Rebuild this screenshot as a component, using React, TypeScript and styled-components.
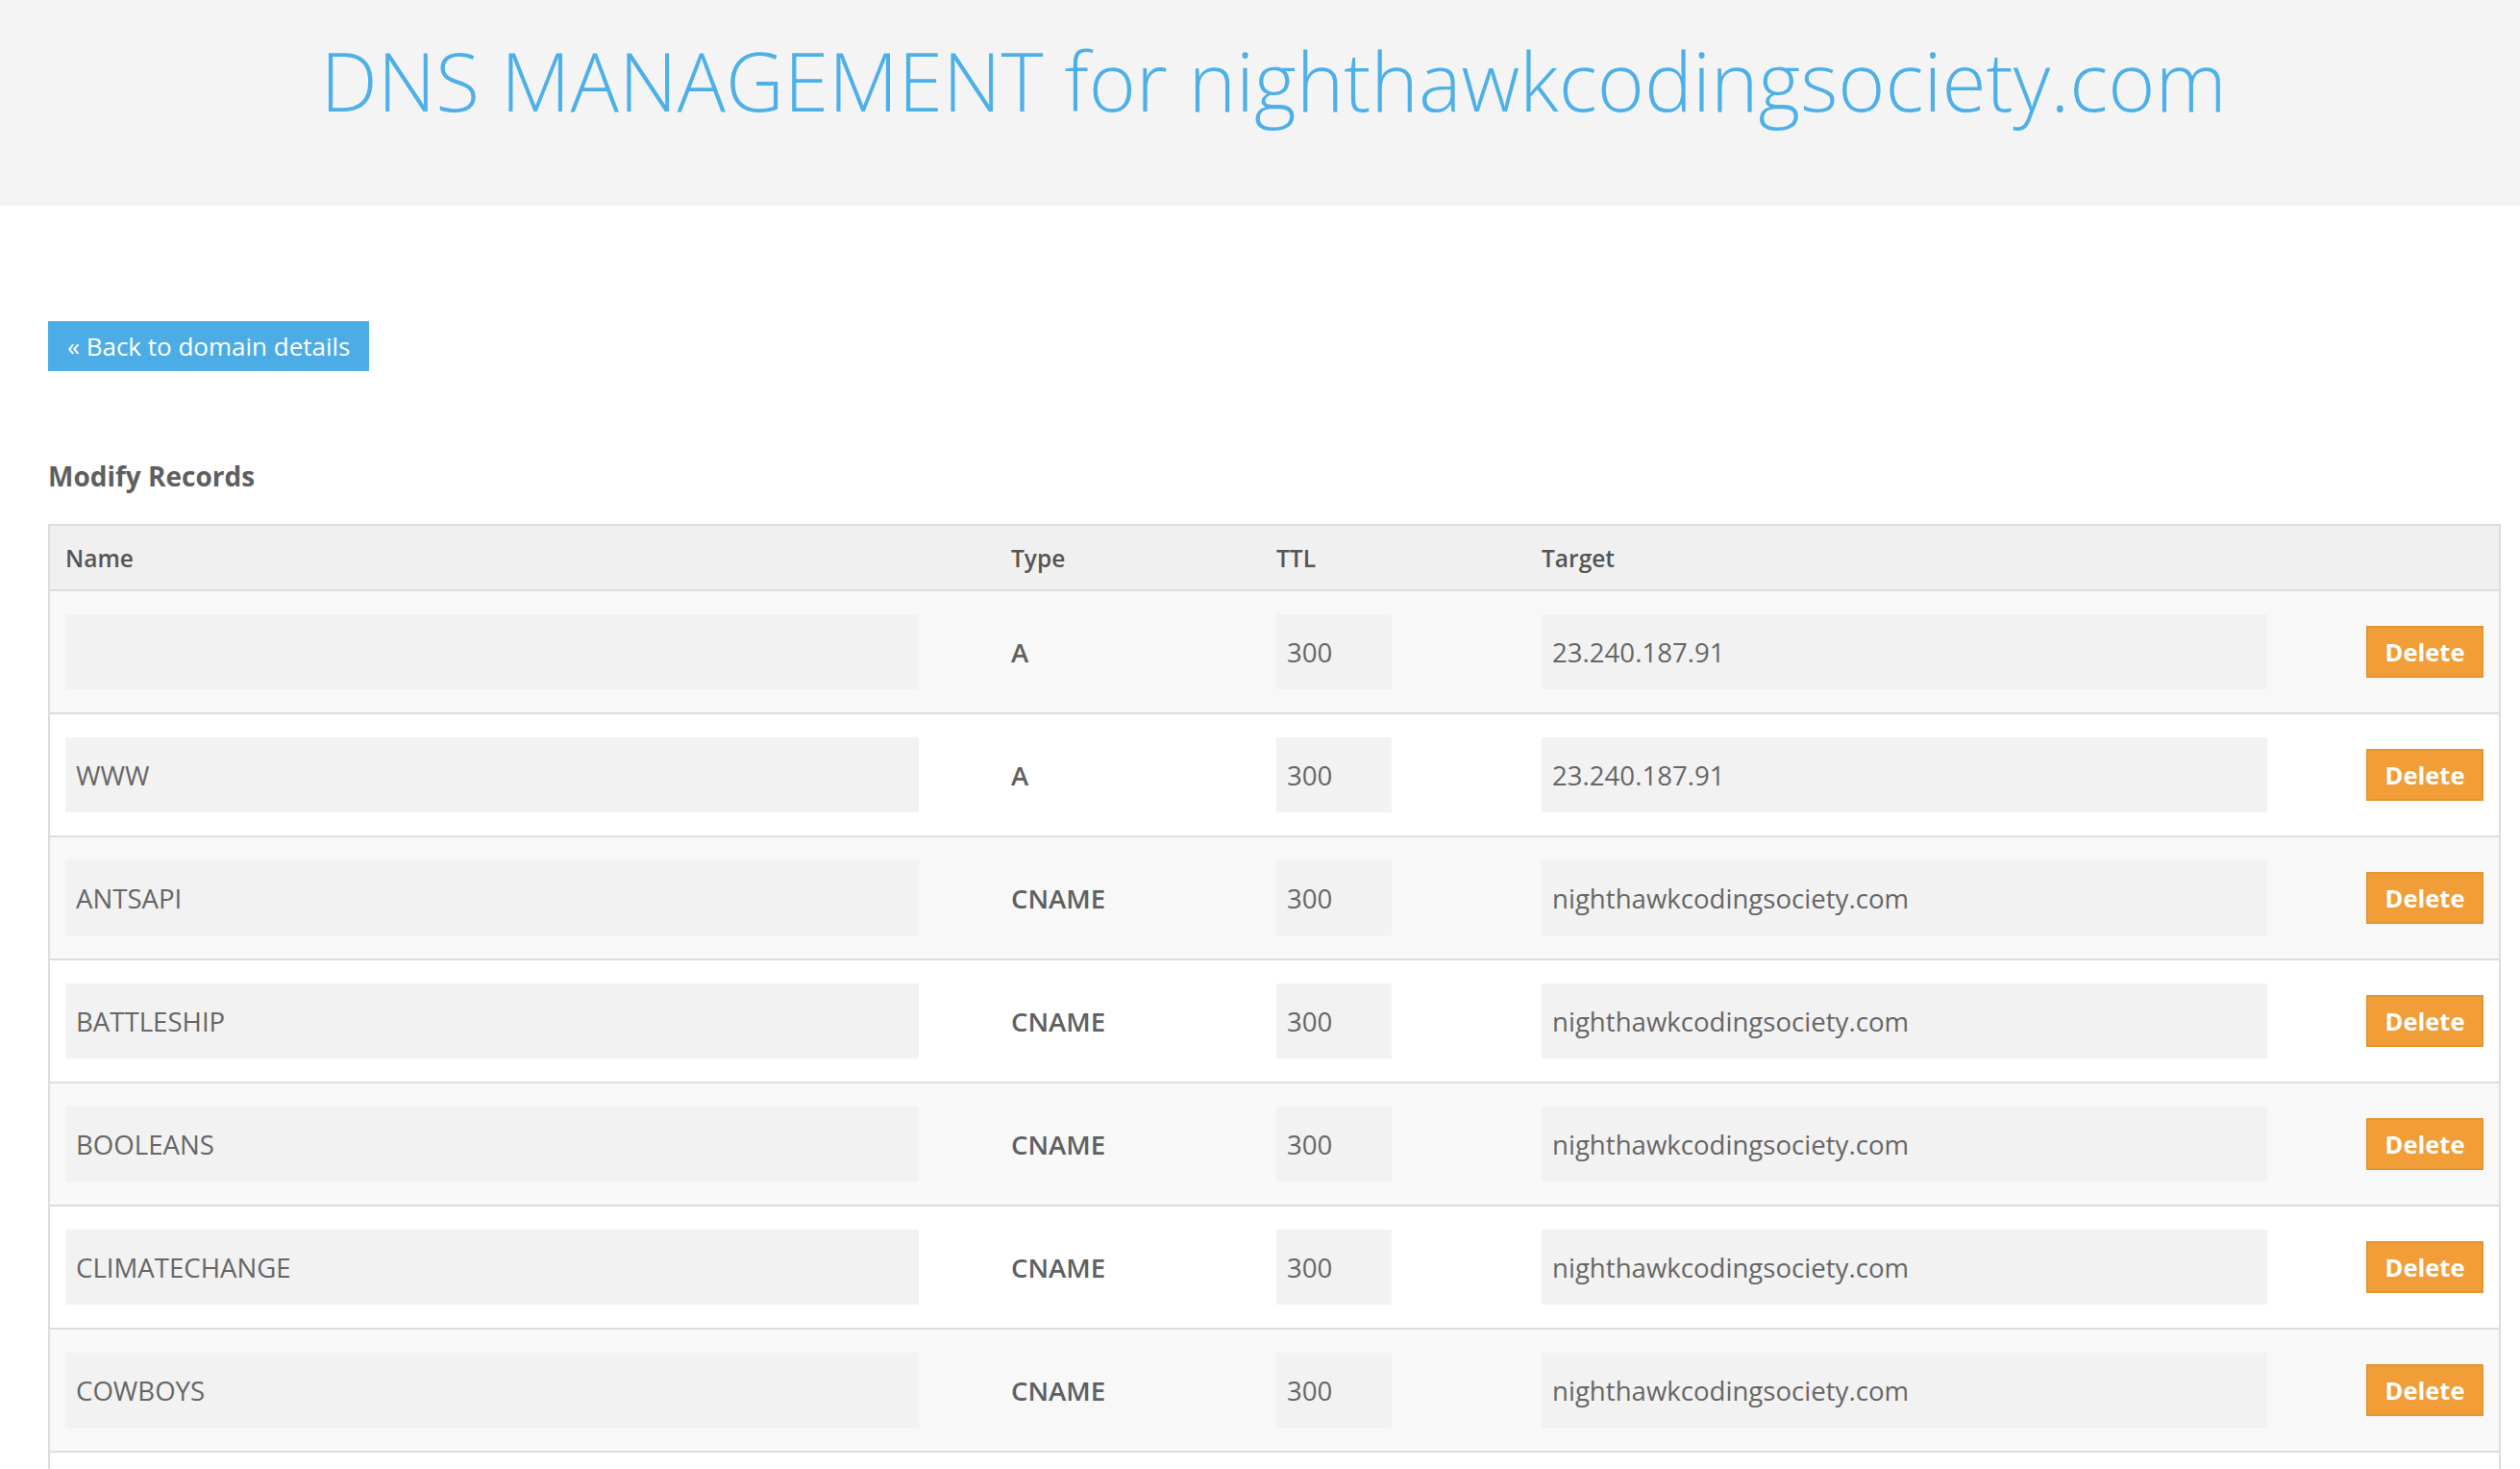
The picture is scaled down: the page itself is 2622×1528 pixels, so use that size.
import styled, { createGlobalStyle } from "styled-components";

type DnsRecord = {
  name: string;
  type: string;
  ttl: number;
  target: string;
};

const records: DnsRecord[] = [
  { name: "", type: "A", ttl: 300, target: "23.240.187.91" },
  { name: "WWW", type: "A", ttl: 300, target: "23.240.187.91" },
  { name: "ANTSAPI", type: "CNAME", ttl: 300, target: "nighthawkcodingsociety.com" },
  { name: "BATTLESHIP", type: "CNAME", ttl: 300, target: "nighthawkcodingsociety.com" },
  { name: "BOOLEANS", type: "CNAME", ttl: 300, target: "nighthawkcodingsociety.com" },
  { name: "CLIMATECHANGE", type: "CNAME", ttl: 300, target: "nighthawkcodingsociety.com" },
  { name: "COWBOYS", type: "CNAME", ttl: 300, target: "nighthawkcodingsociety.com" },
  { name: "CSA", type: "CNAME", ttl: 300, target: "nighthawkcodingsociety.com" },
];

const App = () => {
  return (
    <>
      <GlobalStyle />
      <Header>
        <Title>DNS MANAGEMENT for nighthawkcodingsociety.com</Title>
      </Header>
      <Main>
        <BackButton href="#">« Back to domain details</BackButton>
        <SectionTitle>Modify Records</SectionTitle>
        <Table>
          <HeadRow>
            <HeadCell>Name</HeadCell>
            <HeadCell>Type</HeadCell>
            <HeadCell>TTL</HeadCell>
            <HeadCell>Target</HeadCell>
            <span />
          </HeadRow>
          {records.map((r, i) => (
            <Row key={i} $striped={i % 2 === 0}>
              <Field $width={888} readOnly defaultValue={r.name} />
              <TypeText>{r.type}</TypeText>
              <Field $width={120} readOnly defaultValue={String(r.ttl)} />
              <Field $width={755} readOnly defaultValue={r.target} />
              <DeleteButton>Delete</DeleteButton>
            </Row>
          ))}
        </Table>
      </Main>
    </>
  );
};

export default App;

const GlobalStyle = createGlobalStyle`
  * {
    box-sizing: border-box;
  }

  body {
    margin: 0;
    background: #fff;
    font-family: "Open Sans", "Liberation Sans", sans-serif;
    color: #666;
  }
`;

const Header = styled.header`
  height: 214px;
  background-color: #f4f4f4;
  padding: 27px 0 0 28px;
  text-align: center;
`;

const Title = styled.h1`
  margin: 0;
  font-size: 84px;
  font-weight: 300;
  line-height: 1.362;
  color: #4eb0e8;
`;

const Main = styled.main`
  padding: 120px 20px 0 50px;
`;

const BackButton = styled.a`
  display: inline-flex;
  align-items: center;
  height: 52px;
  padding: 0 20px;
  background-color: #4cade6;
  color: #fff;
  font-size: 26px;
  text-decoration: none;
`;

const SectionTitle = styled.h2`
  margin: 90px 0 31px;
  font-size: 28px;
  font-weight: 700;
  line-height: 1.362;
  color: #5f5f5f;
`;

const Table = styled.div`
  border: 2px solid #dddddd;
  border-bottom: none;
`;

const HeadRow = styled.div`
  display: grid;
  grid-template-columns: 984px 276px 276px 1fr auto;
  align-items: center;
  height: 68px;
  padding: 0 16px;
  background-color: #f0f0f0;
  border-bottom: 2px solid #dddddd;
`;

const HeadCell = styled.div`
  font-size: 24.5px;
  font-weight: 600;
  color: #555;
`;

const Row = styled.div<{ $striped: boolean }>`
  display: grid;
  grid-template-columns: 984px 276px 276px 1fr auto;
  align-items: center;
  padding: 24px 16px;
  background-color: ${(p) => (p.$striped ? "#f8f8f8" : "#fff")};
  border-bottom: 2px solid #dddddd;
`;

const Field = styled.input<{ $width: number }>`
  width: ${(p) => p.$width}px;
  height: 78px;
  padding: 0 11px;
  border: none;
  outline: none;
  background-color: #f2f2f2;
  font-family: "Open Sans", "Liberation Sans", sans-serif;
  font-size: 27.6px;
  color: #666;
`;

const TypeText = styled.div`
  font-size: 27.6px;
  font-weight: 600;
  color: #606060;
`;

const DeleteButton = styled.button`
  width: 122px;
  height: 54px;
  padding: 0;
  background-color: #f19e39;
  border: 2px solid #e5942f;
  color: #fff;
  font-family: "Open Sans", "Liberation Sans", sans-serif;
  font-size: 25.5px;
  font-weight: 700;
  cursor: pointer;
`;
